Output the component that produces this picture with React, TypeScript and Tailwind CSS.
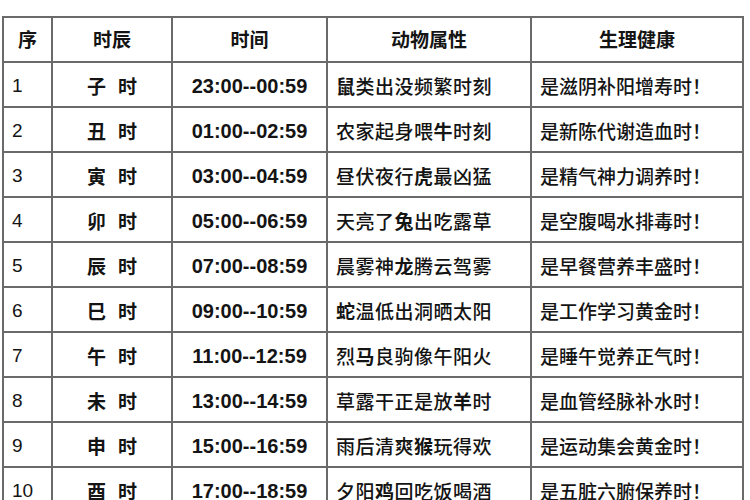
import React from "react";

const rows: [string, string, string, string, string, string, string][] = [
  ["1", "子", "23:00--00:59", "", "鼠", "类出没频繁时刻", "是滋阴补阳增寿时！"],
  ["2", "丑", "01:00--02:59", "农家起身喂", "牛", "时刻", "是新陈代谢造血时！"],
  ["3", "寅", "03:00--04:59", "昼伏夜行", "虎", "最凶猛", "是精气神力调养时！"],
  ["4", "卯", "05:00--06:59", "天亮了", "兔", "出吃露草", "是空腹喝水排毒时！"],
  ["5", "辰", "07:00--08:59", "晨雾神", "龙", "腾云驾雾", "是早餐营养丰盛时！"],
  ["6", "巳", "09:00--10:59", "", "蛇", "温低出洞晒太阳", "是工作学习黄金时！"],
  ["7", "午", "11:00--12:59", "烈", "马", "良驹像午阳火", "是睡午觉养正气时！"],
  ["8", "未", "13:00--14:59", "草露干正是放", "羊", "时", "是血管经脉补水时！"],
  ["9", "申", "15:00--16:59", "雨后清爽", "猴", "玩得欢", "是运动集会黄金时！"],
  ["10", "酉", "17:00--18:59", "夕阳", "鸡", "回吃饭喝酒", "是五脏六腑保养时！"],
];

const cjk = "font-['Noto_Sans_CJK_SC','Noto_Sans',sans-serif]";
const cell = "border-r-2 border-b-2 border-[#6a6a6a] h-[45px] flex items-center";

export default function App() {
  return (
    <div className="w-[750px] h-[500px] overflow-hidden bg-white text-[#141414]">
      <div className="ml-[2px] mt-[16px] w-[742px] border-l-2 border-t-2 border-[#6a6a6a] grid grid-cols-[49px_120px_155px_204px_212px]">
        <div className={`${cell} justify-center ${cjk} font-bold text-[19px]`}>序</div>
        <div className={`${cell} justify-center ${cjk} font-bold text-[19px]`}>时辰</div>
        <div className={`${cell} justify-center ${cjk} font-bold text-[19px]`}>时间</div>
        <div className={`${cell} justify-center ${cjk} font-bold text-[19px]`}>动物属性</div>
        <div className={`${cell} justify-center ${cjk} font-bold text-[19px]`}>生理健康</div>
        {rows.map((r) => (
          <React.Fragment key={r[0]}>
            <div className={`${cell} pl-[8px] pt-[3px] font-['Liberation_Sans',Arial,sans-serif] text-[19px]`}>{r[0]}</div>
            <div className={`${cell} justify-center gap-[12px] pt-[3px] ${cjk} font-bold text-[19px]`}>
              <span>{r[1]}</span>
              <span>时</span>
            </div>
            <div className={`${cell} justify-center pt-[3px] font-['Liberation_Sans',Arial,sans-serif] font-bold text-[20px]`}>{r[2]}</div>
            <div className={`${cell} pl-[8px] pt-[3px] ${cjk} font-medium text-[19px] tracking-[0.5px]`}>
              <span>{r[3]}</span>
              <span className="font-bold">{r[4]}</span>
              <span>{r[5]}</span>
            </div>
            <div className={`${cell} pl-[8px] pt-[3px] ${cjk} font-medium text-[19px]`}>{r[6]}</div>
          </React.Fragment>
        ))}
      </div>
    </div>
  );
}
